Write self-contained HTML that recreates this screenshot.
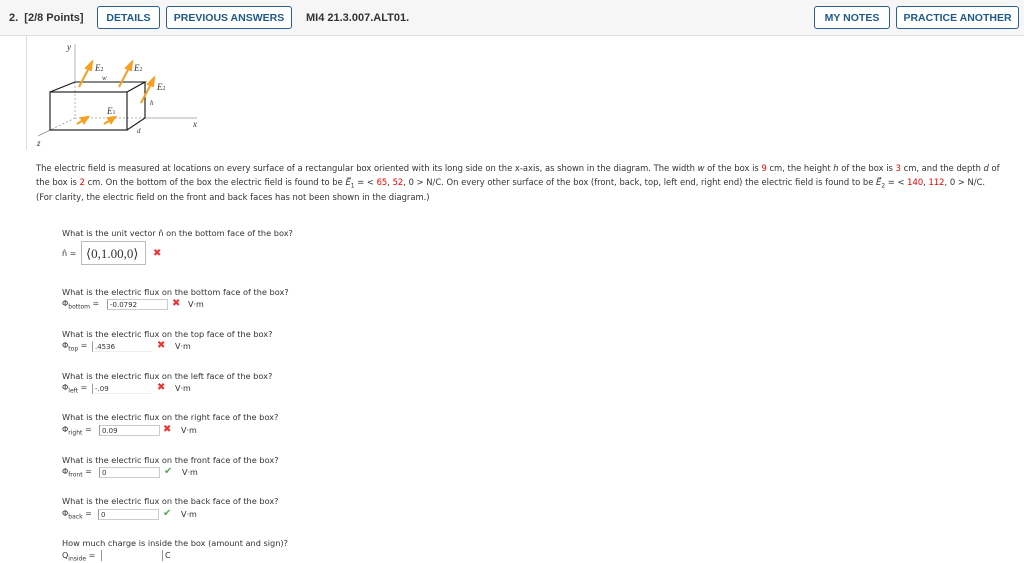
<!DOCTYPE html>
<html><head><meta charset="utf-8"><style>
body{margin:0;width:1024px;height:561px;overflow:hidden;background:#fff;font-family:"DejaVu Sans","Liberation Sans",sans-serif;color:#333;position:relative}
.hdr{position:absolute;left:0;top:0;width:1024px;height:35px;background:#f6f6f6;border-bottom:1px solid #e2e2e2}
.b{position:absolute;top:6px;height:23px;border:1px solid #2a6190;border-radius:3px;background:#fff;color:#1f5a87;font:bold 10.5px "Liberation Sans",sans-serif;line-height:23px;text-align:center;box-sizing:border-box}
.t{position:absolute;font:bold 11px "Liberation Sans",sans-serif;color:#333;top:12px}
.p{position:absolute;left:36px;font-size:8.4px;white-space:nowrap;color:#333}
.r{color:#e00}
.q{position:absolute;left:62px;font-size:8.2px;white-space:nowrap}
.f{position:absolute;left:62px;font-size:8px;white-space:nowrap}
.in{position:absolute;height:11px;border:1px solid #ccc;border-left:1px solid #999;font-size:7px;line-height:11px;padding-left:2px;box-sizing:border-box;background:#fff}
.x{position:absolute;color:#e33;font-size:10px;font-weight:bold}
.ok{position:absolute;color:#5a5;font-size:10px;font-weight:bold}
.u{position:absolute;font-size:8px}
sub{font-size:6px}
</style></head><body>
<div class="hdr"></div>
<div class="t" style="left:9px">2. &nbsp;[2/8 Points]</div>
<div class="b" style="left:97px;width:63px">DETAILS</div>
<div class="b" style="left:166px;width:126px">PREVIOUS ANSWERS</div>
<div class="t" style="left:306px">MI4 21.3.007.ALT01.</div>
<div class="b" style="left:814px;width:76px">MY NOTES</div>
<div class="b" style="left:896px;width:123px">PRACTICE ANOTHER</div>
<div style="position:absolute;left:26px;top:36px;width:1px;height:114px;background:#ddd"></div>
<svg style="position:absolute;left:0;top:36px" width="220" height="115" viewBox="0 36 220 115">
<g stroke="#999" stroke-width="0.7" fill="none">
<line x1="75" y1="44" x2="75" y2="82"/>
<line x1="145" y1="118" x2="197" y2="118"/>
<line x1="75" y1="82" x2="75" y2="118" stroke-dasharray="2,2"/>
<line x1="75" y1="118" x2="145" y2="118" stroke-dasharray="2,2"/>
<line x1="75" y1="118" x2="38" y2="136" stroke-dasharray="2,2"/>
<line x1="50" y1="130" x2="38" y2="136"/>
</g>
<g stroke="#111" stroke-width="1.1" fill="none">
<rect x="50" y="92" width="77" height="38"/>
<polyline points="50,92 75,82 145,82 127,92"/>
<polyline points="145,82 145,118 127,130"/>
</g>
<g stroke="#f5a020" stroke-width="2" fill="#f5a020">
<line x1="79" y1="87" x2="90" y2="66"/><polygon points="92,62 86,68 91,70"/>
<line x1="119" y1="87" x2="130" y2="66"/><polygon points="132,62 126,68 131,70"/>
<line x1="141" y1="103" x2="152" y2="82"/><polygon points="154,78 148,84 153,86"/>
<line x1="77" y1="124" x2="85" y2="119"/><polygon points="88,117 81,118 84,123"/>
<line x1="104" y1="124" x2="112" y2="119"/><polygon points="115,117 108,118 111,123"/>
</g>
<g font-family="Liberation Serif" font-style="italic" font-size="9" fill="#333">
<text x="67" y="50">y</text><text x="95" y="71">E<tspan font-size="6" font-style="normal">2</tspan></text>
<text x="134" y="71">E<tspan font-size="6" font-style="normal">2</tspan></text>
<text x="157" y="90">E<tspan font-size="6" font-style="normal">2</tspan></text>
<text x="102" y="80" font-size="7">w</text><text x="150" y="105" font-size="7">h</text>
<text x="107" y="114">E<tspan font-size="6" font-style="normal">1</tspan></text>
<text x="137" y="133" font-size="7">d</text><text x="193" y="127">x</text><text x="37" y="146">z</text>
</g></svg>
<div class="p" style="top:163px">The electric field is measured at locations on every surface of a rectangular box oriented with its long side on the x-axis, as shown in the diagram. The width <i>w</i> of the box is <span class="r">9</span> cm, the height <i>h</i> of the box is <span class="r">3</span> cm, and the depth <i>d</i> of</div>
<div class="p" style="top:177px">the box is <span class="r">2</span> cm. On the bottom of the box the electric field is found to be <i>E&#8407;</i><sub>1</sub> = &lt; <span class="r">65</span>, <span class="r">52</span>, 0 &gt; N/C. On every other surface of the box (front, back, top, left end, right end) the electric field is found to be <i>E&#8407;</i><sub>2</sub> = &lt; <span class="r">140</span>, <span class="r">112</span>, 0 &gt; N/C.</div>
<div class="p" style="top:192px">(For clarity, the electric field on the front and back faces has not been shown in the diagram.)</div>
<div class="q" style="top:228px">What is the unit vector n&#770; on the bottom face of the box?</div>
<div class="f" style="top:249px">n&#770; =</div>
<div style="position:absolute;left:81px;top:241px;width:65px;height:24px;border:1px solid #bbb;font:13px 'Liberation Serif',serif;line-height:24px;padding-left:4px;box-sizing:border-box">&#10216;0,1.00,0&#10217;</div>
<div class="x" style="left:153px;top:248px">✖</div>
<div class="q" style="top:287px">What is the electric flux on the bottom face of the box?</div>
<div class="f" style="top:299px">Φ<sub>bottom</sub> =</div><div class="in" style="left:107px;top:299px;width:61px">-0.0792</div><div class="x" style="left:172px;top:298px">✖</div><div class="u" style="left:188px;top:300px">V·m</div>
<div class="q" style="top:329px">What is the electric flux on the top face of the box?</div>
<div class="f" style="top:341px">Φ<sub>top</sub> =</div><div class="in" style="left:92px;top:341px;width:61px;border-color:#fff #fff #eee #999">.4536</div><div class="x" style="left:157px;top:340px">✖</div><div class="u" style="left:175px;top:342px">V·m</div>
<div class="q" style="top:371px">What is the electric flux on the left face of the box?</div>
<div class="f" style="top:383px">Φ<sub>left</sub> =</div><div class="in" style="left:92px;top:383px;width:61px;border-color:#fff #fff #eee #999">-.09</div><div class="x" style="left:157px;top:382px">✖</div><div class="u" style="left:175px;top:384px">V·m</div>
<div class="q" style="top:412px">What is the electric flux on the right face of the box?</div>
<div class="f" style="top:425px">Φ<sub>right</sub> =</div><div class="in" style="left:99px;top:425px;width:61px">0.09</div><div class="x" style="left:163px;top:424px">✖</div><div class="u" style="left:181px;top:426px">V·m</div>
<div class="q" style="top:455px">What is the electric flux on the front face of the box?</div>
<div class="f" style="top:467px">Φ<sub>front</sub> =</div><div class="in" style="left:99px;top:467px;width:61px">0</div><div class="ok" style="left:164px;top:466px">✔</div><div class="u" style="left:182px;top:468px">V·m</div>
<div class="q" style="top:496px">What is the electric flux on the back face of the box?</div>
<div class="f" style="top:509px">Φ<sub>back</sub> =</div><div class="in" style="left:98px;top:509px;width:61px">0</div><div class="ok" style="left:163px;top:508px">✔</div><div class="u" style="left:181px;top:510px">V·m</div>
<div class="q" style="top:538px">How much charge is inside the box (amount and sign)?</div>
<div class="f" style="top:551px">Q<sub>inside</sub> =</div><div style="position:absolute;left:101px;top:550px;width:1px;height:11px;background:#999"></div><div style="position:absolute;left:162px;top:550px;width:1px;height:11px;background:#999"></div><div class="u" style="left:165px;top:551px">C</div>
</body></html>
